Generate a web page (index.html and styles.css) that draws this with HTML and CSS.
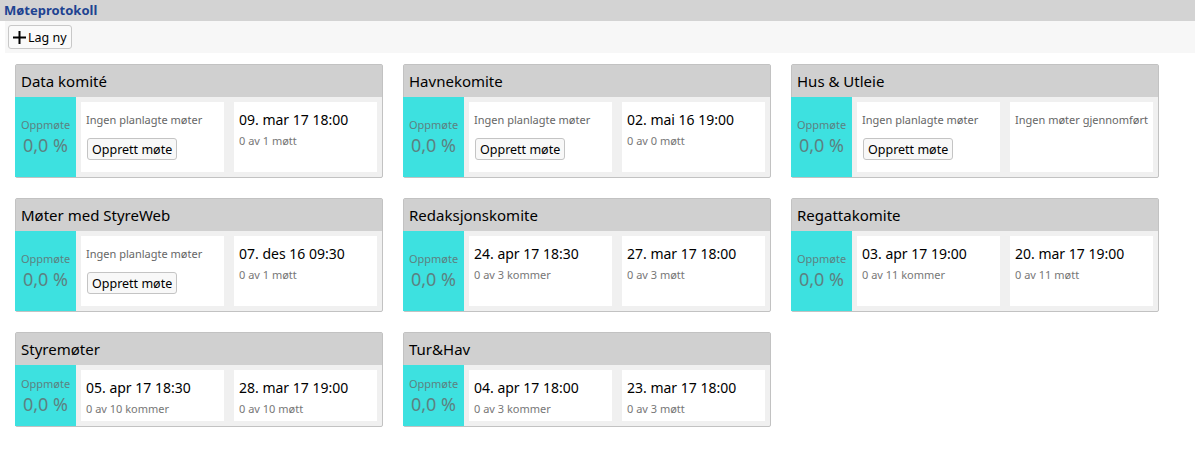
FILE: index.html
```html
<!DOCTYPE html>
<html lang="no">
<head>
	<meta charset="UTF-8">
	<title>Møteprotokoll</title>
	<link rel="stylesheet" href="styles.css">
</head>
<body>
	<div class="titlebar">Møteprotokoll</div>
	<div class="toolbar">
		<button class="btn-new"><svg width="13" height="13" viewBox="0 0 13 13"><path d="M6.5 0v13M0 6.5h13" stroke="#000" stroke-width="2"/></svg>Lag ny</button>
	</div>

	<div class="grid">
		<div class="card">
			<div class="card-head">Data komité</div>
			<div class="card-body">
				<div class="att"><span class="att-label">Oppmøte</span><span class="att-value">0,0 %</span></div>
				<div class="box">
					<div class="muted">Ingen planlagte møter</div>
					<button class="btn">Opprett møte</button>
				</div>
				<div class="box">
					<div class="date">09. mar 17 18:00</div>
					<div class="sub">0 av 1 møtt</div>
				</div>
			</div>
		</div>

		<div class="card">
			<div class="card-head">Havnekomite</div>
			<div class="card-body">
				<div class="att"><span class="att-label">Oppmøte</span><span class="att-value">0,0 %</span></div>
				<div class="box">
					<div class="muted">Ingen planlagte møter</div>
					<button class="btn">Opprett møte</button>
				</div>
				<div class="box">
					<div class="date">02. mai 16 19:00</div>
					<div class="sub">0 av 0 møtt</div>
				</div>
			</div>
		</div>

		<div class="card">
			<div class="card-head">Hus &amp; Utleie</div>
			<div class="card-body">
				<div class="att"><span class="att-label">Oppmøte</span><span class="att-value">0,0 %</span></div>
				<div class="box">
					<div class="muted">Ingen planlagte møter</div>
					<button class="btn">Opprett møte</button>
				</div>
				<div class="box">
					<div class="muted">Ingen møter gjennomført</div>
				</div>
			</div>
		</div>

		<div class="card">
			<div class="card-head">Møter med StyreWeb</div>
			<div class="card-body">
				<div class="att"><span class="att-label">Oppmøte</span><span class="att-value">0,0 %</span></div>
				<div class="box">
					<div class="muted">Ingen planlagte møter</div>
					<button class="btn">Opprett møte</button>
				</div>
				<div class="box">
					<div class="date">07. des 16 09:30</div>
					<div class="sub">0 av 1 møtt</div>
				</div>
			</div>
		</div>

		<div class="card">
			<div class="card-head">Redaksjonskomite</div>
			<div class="card-body">
				<div class="att"><span class="att-label">Oppmøte</span><span class="att-value">0,0 %</span></div>
				<div class="box">
					<div class="date">24. apr 17 18:30</div>
					<div class="sub">0 av 3 kommer</div>
				</div>
				<div class="box">
					<div class="date">27. mar 17 18:00</div>
					<div class="sub">0 av 3 møtt</div>
				</div>
			</div>
		</div>

		<div class="card">
			<div class="card-head">Regattakomite</div>
			<div class="card-body">
				<div class="att"><span class="att-label">Oppmøte</span><span class="att-value">0,0 %</span></div>
				<div class="box">
					<div class="date">03. apr 17 19:00</div>
					<div class="sub">0 av 11 kommer</div>
				</div>
				<div class="box">
					<div class="date">20. mar 17 19:00</div>
					<div class="sub">0 av 11 møtt</div>
				</div>
			</div>
		</div>

		<div class="card">
			<div class="card-head">Styremøter</div>
			<div class="card-body">
				<div class="att"><span class="att-label">Oppmøte</span><span class="att-value">0,0 %</span></div>
				<div class="box">
					<div class="date">05. apr 17 18:30</div>
					<div class="sub">0 av 10 kommer</div>
				</div>
				<div class="box">
					<div class="date">28. mar 17 19:00</div>
					<div class="sub">0 av 10 møtt</div>
				</div>
			</div>
		</div>

		<div class="card">
			<div class="card-head">Tur&amp;Hav</div>
			<div class="card-body">
				<div class="att"><span class="att-label">Oppmøte</span><span class="att-value">0,0 %</span></div>
				<div class="box">
					<div class="date">04. apr 17 18:00</div>
					<div class="sub">0 av 3 kommer</div>
				</div>
				<div class="box">
					<div class="date">23. mar 17 18:00</div>
					<div class="sub">0 av 3 møtt</div>
				</div>
			</div>
		</div>
	</div>
</body>
</html>
```

FILE: styles.css
```css
*{
	margin: 0;
	padding: 0;
	box-sizing: border-box;
}
body{
	background-color: #fff;
	font-family: "Noto Sans", "Open Sans", sans-serif;
	color: #000;
}
.titlebar{
	height: 21px;
	line-height: 21px;
	padding-left: 4px;
	background-color: #d3d3d3;
	color: #1e4391;
	font-size: 13px;
	font-weight: bold;
}
.toolbar{
	height: 32px;
	margin-left: 5px;
	padding: 4px 3px;
	background-color: #f7f7f7;
}
.btn-new{
	display: flex;
	align-items: center;
	gap: 2px;
	height: 24px;
	padding: 0 4px 0 4px;
	border: 1px solid #c8c8c8;
	border-radius: 3px;
	background-color: #fafafa;
	font-family: inherit;
	font-size: 12.5px;
	white-space: nowrap;
	color: #000;
}
.grid{
	display: grid;
	grid-template-columns: repeat(3, 368px);
	gap: 20px;
	padding: 11px 0 0 15px;
}
.card{
	display: flex;
	flex-direction: column;
	border: 1px solid #c2c2c2;
	border-radius: 2px;
	background-color: #f0f0f0;
}
.card-head{
	height: 32px;
	line-height: 33px;
	padding-left: 5px;
	background-color: #d0d0d0;
	font-size: 15px;
}
.card-body{
	display: flex;
	flex: 1;
	padding: 5px 5px 5px 0;
	gap: 10px;
}
.att{
	display: flex;
	flex-direction: column;
	align-items: center;
	justify-content: center;
	flex: none;
	width: 61px;
	margin: -5px -5px -5px -1px;
	background-color: #3de1e0;
	color: #5c8282;
}
.att-label{
	font-size: 11px;
	line-height: 16px;
}
.att-value{
	font-size: 18px;
	line-height: 24px;
}
.box{
	width: 143px;
	padding: 8px 5px 4px 5px;
	background-color: #fff;
}
.muted{
	font-size: 11px;
	line-height: 20px;
	color: #666;
}
.btn{
	display: block;
	margin: 8px 0 8px 1px;
	height: 22px;
	padding: 0 4px;
	border: 1px solid #c4c4c4;
	border-radius: 3px;
	background-color: #f8f8f8;
	font-family: inherit;
	font-size: 12.5px;
	color: #000;
}
.date{
	font-size: 14px;
	line-height: 20px;
}
.sub{
	margin-top: 3px;
	font-size: 11px;
	line-height: 16px;
	color: #777;
}
```
